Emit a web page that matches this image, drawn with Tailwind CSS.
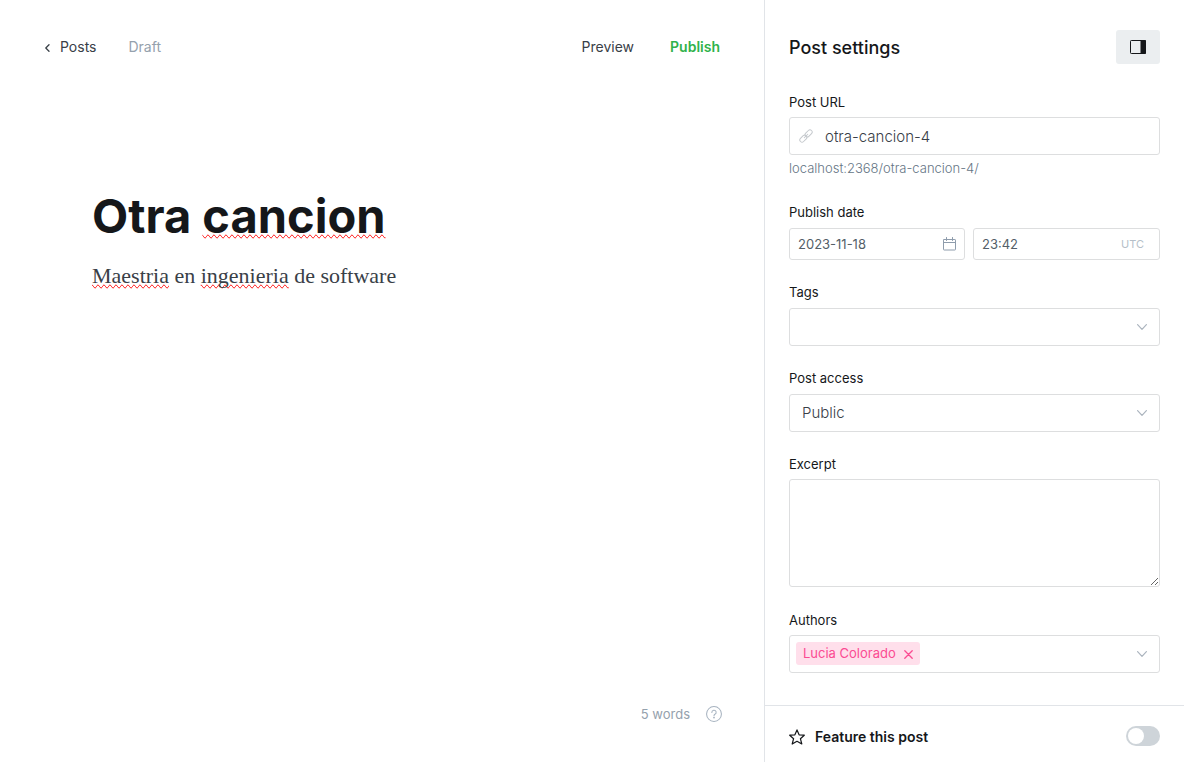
<!DOCTYPE html>
<html lang="en">
<head>
<meta charset="utf-8">
<meta name="viewport" content="width=device-width, initial-scale=1">
<title>Post editor</title>
<script src="https://cdn.jsdelivr.net/npm/@tailwindcss/browser@4"></script>
</head>
<body class="flex min-h-screen bg-white font-['Inter',sans-serif] text-[#15171a]">
<main class="flex min-w-0 flex-1 flex-col">
  <header class="flex h-[94px] items-center justify-between pr-11 pl-11 text-sm leading-5">
    <div class="flex items-center gap-8">
      <a href="#posts" class="flex items-center gap-2 text-[#394047]">
        <svg class="mt-0.5 h-2 w-2" viewBox="0 0 8 8" fill="none" stroke="currentColor" stroke-width="1.3" stroke-linecap="round" stroke-linejoin="round"><path d="M5 .8 1.8 4 5 7.2"/></svg>
        Posts
      </a>
      <span class="text-[#95a1ad]">Draft</span>
    </div>
    <div class="flex items-center gap-9">
      <button type="button" class="text-[#394047]">Preview</button>
      <button type="button" class="font-semibold text-[#30b24a]">Publish</button>
    </div>
  </header>
  <article class="flex-1 px-[92px] pt-[92px]">
    <h1 class="text-[47px] leading-[60px] font-bold">Otra <span class="[text-decoration-line:spelling-error]">cancion</span></h1>
    <p class="mt-4 font-['Liberation_Serif',serif] text-[22px] leading-7 text-[#394047]"><span class="[text-decoration-line:spelling-error]">Maestria</span> en <span class="[text-decoration-line:spelling-error]">ingenieria</span> de software</p>
  </article>
  <footer class="flex items-center justify-end gap-4 pr-[42px] pb-[38px] text-[13px] leading-5 text-[#95a1ad]">
    <span>5 words</span>
    <button type="button" aria-label="Help">
      <svg class="h-4 w-4" viewBox="0 0 17 17" fill="none" stroke="#a6b2bf" stroke-width="1.1" stroke-linecap="round" stroke-linejoin="round"><circle cx="8.5" cy="8.5" r="7.9"/><path d="M6.2 6.8a2.3 2.3 0 1 1 3.3 2c-.7.4-1 .7-1 1.5"/><circle cx="8.5" cy="12.3" r=".4" fill="#a6b2bf"/></svg>
    </button>
  </footer>
</main>
<aside class="flex w-[420px] shrink-0 flex-col border-l border-[#e1e4e8]">
  <form class="flex flex-1 flex-col px-6 pt-[30px] text-[13px] leading-5">
    <div class="mb-7 flex items-center justify-between">
      <h2 class="pt-0.5 text-lg leading-6 font-medium">Post settings</h2>
      <button type="button" aria-label="Toggle settings" class="flex h-[34px] w-11 items-center justify-center rounded-[3px] bg-[#ebeef0]">
        <svg class="h-3.5 w-4" viewBox="0 0 16 14"><rect x=".5" y=".5" width="15" height="13" rx=".8" fill="none" stroke="#15171a"/><path d="M10.5 0H15a1 1 0 0 1 1 1v12a1 1 0 0 1-1 1h-4.500z" fill="#15171a"/></svg>
      </button>
    </div>

    <label for="url" class="mb-[5px]">Post URL</label>
    <div class="flex h-[38px] items-center gap-3 rounded-[3px] border border-[#dddedf] pl-[9px]">
      <svg class="h-3.5 w-3.5 shrink-0" viewBox="0 0 14 14" fill="none" stroke="#c5c9cd" stroke-linecap="round"><g transform="rotate(-45 7 7)"><rect x="-.8" y="4.800" width="8.200" height="4.400" rx="2.200"/><rect x="6.600" y="4.800" width="8.200" height="4.400" rx="2.200"/><path d="M4.500 7h5"/></g></svg>
      <input id="url" type="text" value="otra-cancion-4" class="min-w-0 flex-1 pt-px text-[15px] font-light text-[#394047] outline-none">
    </div>
    <p class="mt-[3px] mb-6 font-light text-[#657585]">localhost:2368/otra-cancion-4/</p>

    <label for="date" class="mb-1.5">Publish date</label>
    <div class="mb-[22px] flex gap-2">
      <div class="flex h-8 w-44 items-center rounded-[3px] border border-[#dddedf] px-2">
        <input id="date" type="text" value="2023-11-18" class="min-w-0 flex-1 text-[#545f68] outline-none">
        <svg class="h-3.5 w-3.5 shrink-0" viewBox="0 0 14 14" fill="none" stroke="#8e9cac" stroke-linecap="round"><rect x="1.500" y="2.500" width="12" height="10.500" rx=".6"/><path d="M1.500 5.500h12M4.500.5v3M10.500.5v3"/></svg>
      </div>
      <div class="flex h-8 min-w-0 flex-1 items-center rounded-[3px] border border-[#dddedf] pr-[15px] pl-2">
        <input type="text" aria-label="Publish time" value="23:42" class="min-w-0 flex-1 text-[#545f68] outline-none">
        <span class="text-[11px] text-[#b5bfc9]">UTC</span>
      </div>
    </div>

    <label for="tags" class="mb-1.5">Tags</label>
    <div class="mb-[22px] flex h-[38px] items-center rounded-[3px] border border-[#dddedf] pr-3 pl-2">
      <input id="tags" type="text" class="min-w-0 flex-1 text-[15px] outline-none">
      <svg class="h-1.5 w-2.5 shrink-0" viewBox="0 0 10 6" fill="none" stroke="#abb4be" stroke-width="1.2" stroke-linecap="round" stroke-linejoin="round"><path d="M.6.6 5 5.300 9.400.6"/></svg>
    </div>

    <label for="access" class="mb-1.5">Post access</label>
    <div class="mb-[22px] grid h-[38px] items-center rounded-[3px] border border-[#dddedf]">
      <select id="access" class="col-start-1 row-start-1 h-full w-full appearance-none pr-8 pl-3 text-[15px] font-light text-[#394047] outline-none"><option>Public</option></select>
      <svg class="pointer-events-none col-start-1 row-start-1 mr-3 h-1.5 w-2.5 justify-self-end" viewBox="0 0 10 6" fill="none" stroke="#abb4be" stroke-width="1.2" stroke-linecap="round" stroke-linejoin="round"><path d="M.6.6 5 5.300 9.400.6"/></svg>
    </div>

    <label for="excerpt" class="mb-[5px]">Excerpt</label>
    <textarea id="excerpt" class="mb-[23px] h-[108px] resize-y rounded-[3px] border border-[#dddedf] px-3 py-2 outline-none"></textarea>

    <label for="authors" class="mb-[5px]">Authors</label>
    <div class="mb-8 flex h-[38px] items-center rounded-[3px] border border-[#dddedf] pr-3 pl-1.5">
      <span class="mb-0.5 flex h-[23px] items-center gap-2 rounded-[3px] bg-[#ffdfeb] pr-[7px] pl-[7px] text-[#fb4b92]">Lucia Colorado
        <button type="button" aria-label="Remove Lucia Colorado"><svg class="mt-0.5 block h-[9px] w-[9px]" viewBox="0 0 9 9" fill="none" stroke="currentColor" stroke-width="1.3" stroke-linecap="round"><path d="m.8.8 7.400 7.400M8.200.8.8 8.200"/></svg></button>
      </span>
      <input id="authors" type="text" class="min-w-0 flex-1 text-[15px] outline-none">
      <svg class="h-1.5 w-2.5 shrink-0" viewBox="0 0 10 6" fill="none" stroke="#abb4be" stroke-width="1.2" stroke-linecap="round" stroke-linejoin="round"><path d="M.6.6 5 5.300 9.400.6"/></svg>
    </div>
  </form>
  <div class="flex h-[57px] items-center border-t border-[#e1e4e8] px-6 pt-1">
    <label for="feature" class="flex flex-1 items-center gap-2.5 pt-px text-sm leading-5 font-semibold">
      <svg class="h-4 w-4" viewBox="0 0 16 16" fill="none" stroke="#15171a" stroke-width="1.2" stroke-linejoin="round"><path d="m8 .9 2.100 4.900 5.200.4-3.900 3.500 1.400 5.300L8 12.300 3.200 15l1.400-5.300L.7 6.200l5.200-.4z"/></svg>
      Feature this post
    </label>
    <input id="feature" type="checkbox" role="switch" class="h-5 w-[34px] appearance-none rounded-full bg-[#ced4d9] p-0.5 before:block before:h-4 before:w-4 before:rounded-full before:bg-white before:content-[''] checked:bg-[#30cf43] checked:before:ml-3.5">
  </div>
</aside>
</body>
</html>
